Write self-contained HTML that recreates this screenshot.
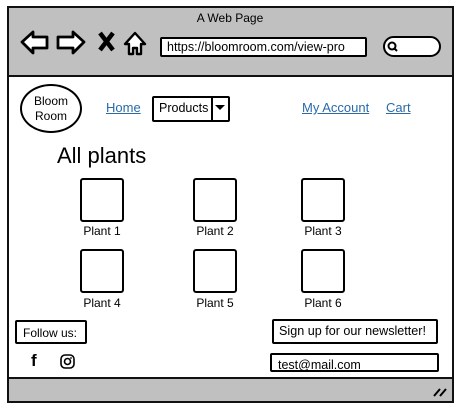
<!DOCTYPE html>
<html><head><style>
*{margin:0;padding:0;box-sizing:border-box}
body{width:460px;height:410px;background:#fff;position:relative;overflow:hidden;font-family:"Liberation Sans",sans-serif;color:#000}
.a{position:absolute}
.box{position:absolute;border:2px solid #000;background:#fff;border-radius:2px}
.lk{position:absolute;color:#2a6aa8;text-decoration:underline;font-size:13px}
.pl{position:absolute;width:44px;height:44px;border:2px solid #000;border-radius:3px}
.lb{position:absolute;font-size:12px;width:80px;text-align:center}
</style></head><body>
<div class="a" style="left:7px;top:6px;width:447px;height:397px;border:2px solid #111;background:#fff"></div>
<div class="a" style="left:9px;top:8px;width:443px;height:69px;background:#c0c0c0;border-bottom:2px solid #111"></div>
<div class="a" style="left:9px;top:377px;width:443px;height:24px;background:#c0c0c0;border-top:2px solid #111"></div>
<div class="a" style="left:0;top:11px;width:460px;text-align:center;font-size:12px">A Web Page</div>
<svg class="a" style="left:18px;top:28px" width="135" height="30" viewBox="0 0 135 30">
<path d="M4 14 L15 4 L15 9 L29 9 L29 20 L15 20 L15 25 Z" fill="#fff" stroke="#000" stroke-width="2.8" stroke-linejoin="round"/>
<path d="M66 14 L55 4 L55 9 L40 9 L40 20 L55 20 L55 25 Z" fill="#fff" stroke="#000" stroke-width="2.8" stroke-linejoin="round"/>
<path d="M82 5 L95 22 M95 5 L82 22" stroke="#000" stroke-width="4.5"/>
<path d="M107 16 L117 5 L127 16 L123 16 L123 26 L119 26 L119 20 L115 20 L115 26 L111 26 L111 16 Z" fill="#fff" stroke="#000" stroke-width="2.4" stroke-linejoin="round"/>
</svg>
<div class="box" style="left:160px;top:37px;width:207px;height:20px;font-size:12.5px;padding:1px 0 0 5px;line-height:15px">https://bloomroom.com/view-pro</div>
<div class="box" style="left:383px;top:36px;width:58px;height:21px;border-radius:11px"></div>
<svg class="a" style="left:387px;top:41px" width="12" height="12"><circle cx="5" cy="5" r="3.5" fill="none" stroke="#000" stroke-width="2"/><path d="M7.5 7.5 L10 10" stroke="#000" stroke-width="2"/></svg>
<div class="a" style="left:20px;top:84px;width:62px;height:49px;border:2px solid #000;border-radius:50%;font-size:12px;text-align:center;line-height:15px;padding-top:8px">Bloom<br>Room</div>
<div class="lk" style="left:106px;top:100px">Home</div>
<div class="box" style="left:152px;top:96px;width:78px;height:26px;font-size:12.5px;padding:3px 0 0 5px">Products</div>
<div class="a" style="left:211px;top:97px;width:2px;height:24px;background:#000"></div>
<div class="a" style="left:215px;top:105px;border-left:5px solid transparent;border-right:5px solid transparent;border-top:5px solid #000"></div>
<div class="lk" style="left:302px;top:100px">My Account</div>
<div class="lk" style="left:386px;top:100px">Cart</div>
<div class="a" style="left:57px;top:143px;font-size:22px">All plants</div>
<div class="pl" style="left:80px;top:178px"></div><div class="pl" style="left:193px;top:178px"></div><div class="pl" style="left:301px;top:178px"></div>
<div class="pl" style="left:80px;top:249px"></div><div class="pl" style="left:193px;top:249px"></div><div class="pl" style="left:301px;top:249px"></div>
<div class="lb" style="left:62px;top:224px">Plant 1</div><div class="lb" style="left:175px;top:224px">Plant 2</div><div class="lb" style="left:283px;top:224px">Plant 3</div>
<div class="lb" style="left:62px;top:296px">Plant 4</div><div class="lb" style="left:175px;top:296px">Plant 5</div><div class="lb" style="left:283px;top:296px">Plant 6</div>
<div class="box" style="left:15px;top:320px;width:72px;height:24px;font-size:12px;padding:4px 0 0 6px">Follow us:</div>
<div class="a" style="left:31px;top:351px;font-size:17px;font-weight:bold">f</div>
<svg class="a" style="left:60px;top:354px" width="15" height="15"><rect x="1" y="1" width="13" height="13" rx="4" fill="none" stroke="#000" stroke-width="1.6"/><circle cx="7.5" cy="7.5" r="3" fill="none" stroke="#000" stroke-width="1.6"/><circle cx="11" cy="4" r="0.9"/></svg>
<div class="box" style="left:272px;top:319px;width:166px;height:25px;font-size:12.6px;padding:3px 0 0 5px;white-space:nowrap">Sign up for our newsletter!</div>
<div class="box" style="left:270px;top:353px;width:169px;height:19px;font-size:12.5px;padding:3px 0 0 6px;overflow:hidden;line-height:14px">test@mail.com</div>
<svg class="a" style="left:432px;top:386px" width="16" height="12"><path d="M2 10 L8 3 M8 10 L14 3" stroke="#000" stroke-width="2"/></svg>
</body></html>
